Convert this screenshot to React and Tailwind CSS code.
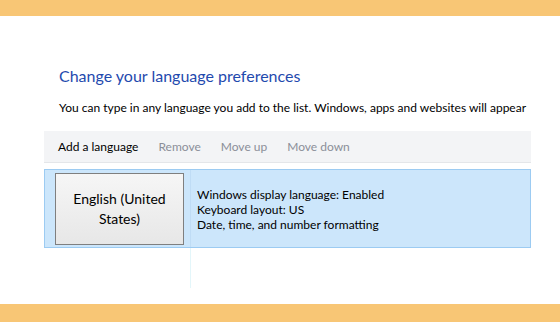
import React from 'react';

export default function App() {
  const font = { fontFamily: 'Lato, "Noto Sans", sans-serif' };
  const tools = [
    { label: 'Add a language', active: true },
    { label: 'Remove' },
    { label: 'Move up' },
    { label: 'Move down' },
  ];

  return (
    <div className="w-[560px] h-[322px] bg-white flex flex-col overflow-hidden" style={font}>
      <div className="h-[16px] bg-[#f8c675]" />

      <div className="flex-1 flex flex-col">
        <h1 className="ml-[59px] mt-[49px] text-[16px] leading-[22px] text-[#1f4aae] whitespace-nowrap">
          Change your language preferences
        </h1>
        <p className="ml-[59px] mt-[13px] text-[12px] leading-[16px] text-black whitespace-nowrap">
          You can type in any language you add to the list. Windows, apps and websites will appear
        </p>

        {/* toolbar */}
        <div className="ml-[44px] w-[487px] mt-[15px] h-[32px] bg-[#f3f4f6] border-b border-[#e4e6e9] flex items-center pl-[14px] gap-[20px] text-[12px]">
          {tools.map((t) => (
            <span key={t.label} className={t.active ? 'text-black' : 'text-[#8b8f99]'}>
              {t.label}
            </span>
          ))}
        </div>

        {/* language row */}
        <div className="ml-[44px] w-[487px] mt-[6px] h-[79px] bg-[#cce6fb] border border-[#9ccbf2] flex">
          <div className="w-[145px] flex items-center pl-[10px]">
            <div className="w-[129px] h-[72px] border border-[#7f7f7f] bg-gradient-to-b from-[#f6f6f6] to-[#e7e7e7] flex items-center justify-center text-center text-[14px] leading-[20px] text-black">
              English (United<br />States)
            </div>
          </div>
          <div className="flex-1 border-l border-[#bfdcf5] flex flex-col justify-center pl-[6px] pt-[1px] text-[12px] leading-[15px] text-black">
            <span>Windows display language: Enabled</span>
            <span>Keyboard layout: US</span>
            <span>Date, time, and number formatting</span>
          </div>
        </div>

        <div className="ml-[190px] h-[40px] border-l border-[#e3f6fa]" />
      </div>

      <div className="h-[18px] bg-[#f8c675]" />
    </div>
  );
}
